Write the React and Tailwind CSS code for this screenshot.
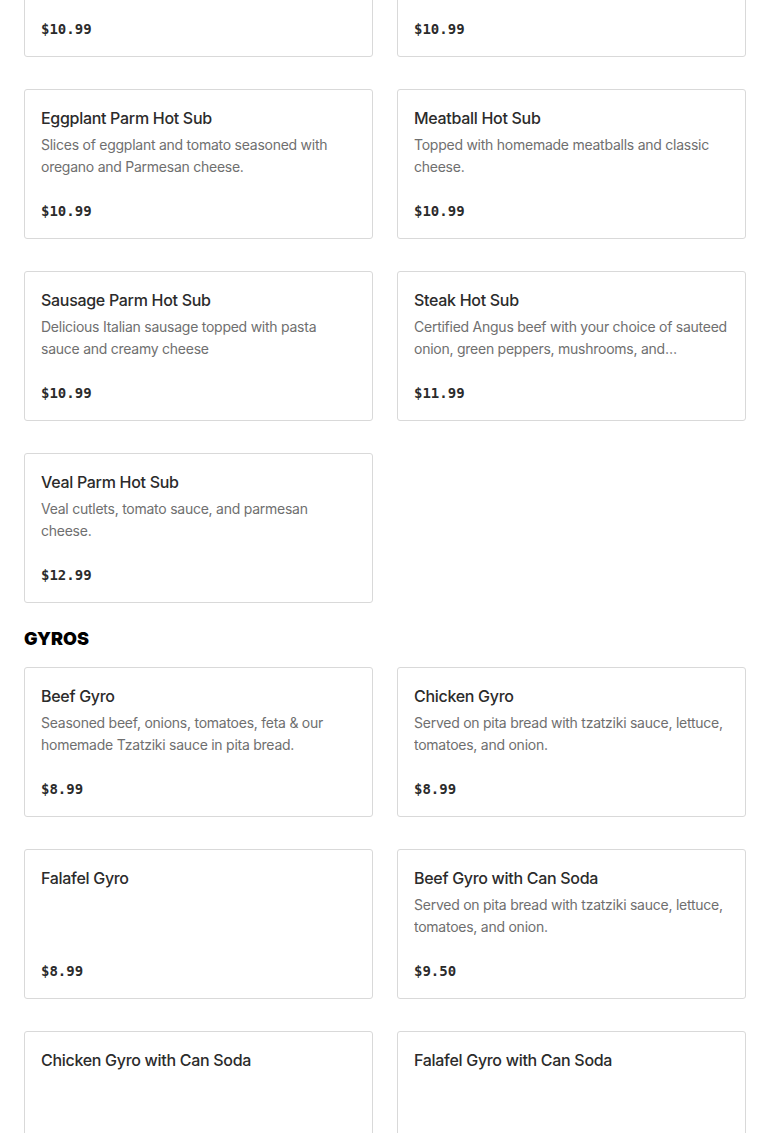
import React from 'react';

const hotSubs = [
  { name: 'Chicken Parm Hot Sub', description: 'Breaded chicken cutlet with pasta sauce and melted mozzarella cheese.', price: '$10.99' },
  { name: 'Italian Hot Sub', description: 'Ham, salami, capicola and provolone cheese, toasted.', price: '$10.99' },
  { name: 'Eggplant Parm Hot Sub', description: 'Slices of eggplant and tomato seasoned with oregano and Parmesan cheese.', price: '$10.99' },
  { name: 'Meatball Hot Sub', description: 'Topped with homemade meatballs and classic cheese.', price: '$10.99' },
  { name: 'Sausage Parm Hot Sub', description: 'Delicious Italian sausage topped with pasta sauce and creamy cheese', price: '$10.99' },
  { name: 'Steak Hot Sub', description: 'Certified Angus beef with your choice of sauteed onion, green peppers, mushrooms, and provolone cheese.', price: '$11.99' },
  { name: 'Veal Parm Hot Sub', description: 'Veal cutlets, tomato sauce, and parmesan cheese.', price: '$12.99' }
];

const gyros = [
  { name: 'Beef Gyro', description: 'Seasoned beef, onions, tomatoes, feta & our homemade Tzatziki sauce in pita bread.', price: '$8.99' },
  { name: 'Chicken Gyro', description: 'Served on pita bread with tzatziki sauce, lettuce, tomatoes, and onion.', price: '$8.99' },
  { name: 'Falafel Gyro', description: '', price: '$8.99' },
  { name: 'Beef Gyro with Can Soda', description: 'Served on pita bread with tzatziki sauce, lettuce, tomatoes, and onion.', price: '$9.50' },
  { name: 'Chicken Gyro with Can Soda', description: '', price: '$9.50' },
  { name: 'Falafel Gyro with Can Soda', description: '', price: '$9.50' }
];

const MenuItem = ({ item }) => (
  <div className="flex h-[150px] flex-col rounded-[3px] border border-[#d9d9d9] bg-white p-4">
    <h3 className="text-[16px] leading-6 font-medium tracking-[-0.3px] text-[#2b2b2b]">{item.name}</h3>
    <p className="mt-1 line-clamp-2 text-[14px] leading-[22px] tracking-[-0.25px] text-[#6f6f6f]">{item.description}</p>
    <p className="mt-auto font-['DejaVu_Sans_Mono',monospace] text-[14px] leading-[22px] font-bold text-[#2b2b2b]">
      {item.price}
    </p>
  </div>
);

const App = () => {
  return (
    <div className="min-h-screen overflow-hidden bg-white font-['Inter',sans-serif]">
      <div className="mt-[-93px] px-6">
        {/* Hot Subs */}
        <div className="grid grid-cols-2 gap-x-6 gap-y-8">
          {hotSubs.map((item, index) => (
            <MenuItem key={index} item={item} />
          ))}
        </div>

        {/* Gyros */}
        <h2 className="mt-6 mb-4 text-[18px] leading-6 font-black text-black">GYROS</h2>
        <div className="grid grid-cols-2 gap-x-6 gap-y-8 pb-8">
          {gyros.map((item, index) => (
            <MenuItem key={index} item={item} />
          ))}
        </div>
      </div>
    </div>
  );
};

export default App;
